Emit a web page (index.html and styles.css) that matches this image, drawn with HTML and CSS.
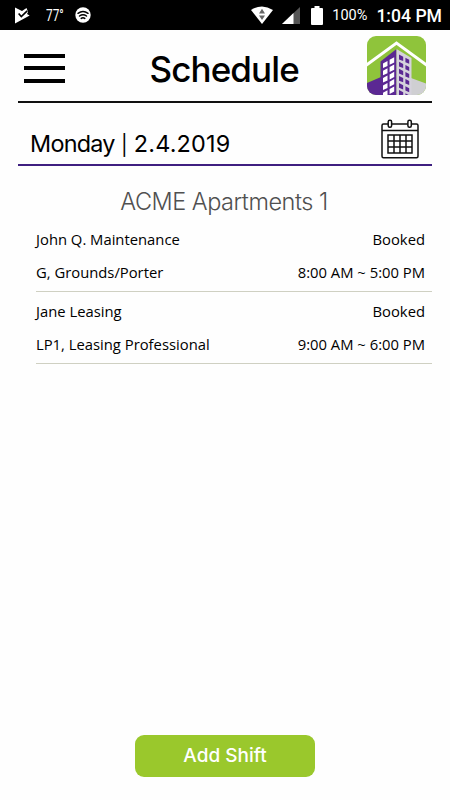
FILE: index.html
```html
<!DOCTYPE html>
<html lang="en">
<head>
<meta charset="utf-8">
<title>Schedule</title>
<link rel="stylesheet" href="styles.css">
</head>
<body>
<div class="screen">
  <div class="status">
    <svg class="status-check" viewBox="0 0 16 17" width="16" height="17"><path d="M1 0.5 L8 4 L12.5 1 L14 5 L13 7 L15.7 8.5 L1 16.5Z" fill="#fff"/><path d="M4.6 6.5 L7.3 9.5 L13.2 3.8" fill="none" stroke="#000" stroke-width="1.6"/></svg>
    <span class="temp">77°</span>
    <svg class="status-cast" viewBox="0 0 16 16" width="16" height="16"><circle cx="8" cy="8" r="7.7" fill="#fff"/><g fill="none" stroke="#000" stroke-width="1.5" stroke-linecap="round"><path d="M3 6.3 Q8 2.8 13 6.3"/><path d="M4.5 9 Q8 6.4 11.5 9"/><path d="M6.2 11.4 Q8 10 9.8 11.4"/></g></svg>
    <svg class="status-wifi" viewBox="0 0 22 18" width="22" height="18"><path d="M0 4 Q11 -3 22 4 L11 18Z" fill="#fff"/><path d="M11 2.8 L14 7.5 H8Z M8 9.5 H14 L11 14Z" fill="#666"/></svg>
    <svg class="status-signal" viewBox="0 0 18 17" width="18" height="17"><path d="M0 17 L18 0 V17Z" fill="#555"/><path d="M0 17 L11.5 6.1 V17Z" fill="#fff"/></svg>
    <svg class="status-battery" viewBox="0 0 12 19" width="12" height="19"><path d="M0 3 Q0 2 1 2 H3.5 V0 H8.5 V2 H11 Q12 2 12 3 V18 Q12 19 11 19 H1 Q0 19 0 18Z" fill="#fff"/></svg>
    <span class="percent">100%</span>
    <span class="clock">1:04 PM</span>
  </div>

  <header class="header">
    <div class="menu"><i></i><i></i><i></i></div>
    <h1 class="title">Schedule</h1>
    <svg class="logo" viewBox="0 0 59 59" width="59" height="59">
      <defs>
        <clipPath id="tile"><rect width="59" height="59" rx="9"/></clipPath>
        <path id="panes-left" fill="#fff" d="M16 27.5 L20.5 25 V30 L16 32Z M22.6 23.8 L27.2 21.2 V26.4 L22.6 28.8Z"/>
        <path id="panes-right" fill="#5b2893" d="M32 18.6 L36.2 20.8 V25 L32 23.4Z M38.4 21.8 L42.2 23.8 V27.8 L38.4 26.2Z"/>
      </defs>
      <g clip-path="url(#tile)">
        <rect width="59" height="59" fill="#8fc43b"/>
        <path d="M0 47 L14 41 V59 H0Z" fill="#5b2893"/>
        <path d="M44 42 L59 47.5 V59 H44Z" fill="#cfcfd2"/>
        <path d="M-2 30 L29.5 7 L61 30" fill="none" stroke="#fff" stroke-width="3"/>
        <path d="M13.5 25.5 L29.5 13 V59 H13.5Z" fill="#5b2893"/>
        <path d="M29.5 13 L44.5 22 V59 H29.5Z" fill="#d5d2dc"/>
        <use href="#panes-left"/>
        <use href="#panes-left" y="7.3"/>
        <use href="#panes-left" y="14.6"/>
        <use href="#panes-left" y="21.9"/>
        <use href="#panes-left" y="29.2"/>
        <use href="#panes-right"/>
        <use href="#panes-right" y="7.1"/>
        <use href="#panes-right" y="14.2"/>
        <use href="#panes-right" y="21.3"/>
        <use href="#panes-right" y="28.4"/>
        <use href="#panes-right" y="35.5"/>
      </g>
    </svg>
  </header>

  <div class="datebar">
    <span class="date"><span class="day">Monday</span> <span class="bar">|</span> <span class="numbers">2.4.2019</span></span>
    <svg class="calendar" viewBox="0 0 38 40" width="38" height="40" fill="none" stroke="#111" stroke-width="1.5">
      <rect x="1" y="5" width="36" height="33.8" rx="1.5"/>
      <path d="M1 11.5 H37"/>
      <rect x="7.2" y="1.2" width="3.4" height="7" rx="1.5" fill="#fff"/>
      <rect x="26.9" y="1.2" width="3.4" height="7" rx="1.5" fill="#fff"/>
      <path d="M7 16 H31 V34 H7Z M13 16 V34 M19 16 V34 M25 16 V34 M7 22 H31 M7 28 H31"/>
    </svg>
  </div>

  <h2 class="property">ACME Apartments 1</h2>

  <main class="shifts">
    <section class="shift">
      <div class="row"><span>John Q. Maintenance</span><span>Booked</span></div>
      <div class="row"><span>G, Grounds/Porter</span><span>8:00 AM ~ 5:00 PM</span></div>
    </section>
    <section class="shift">
      <div class="row"><span>Jane Leasing</span><span>Booked</span></div>
      <div class="row"><span>LP1, Leasing Professional</span><span>9:00 AM ~ 6:00 PM</span></div>
    </section>
  </main>

  <button class="add">Add Shift</button>
</div>
</body>
</html>
```

FILE: styles.css
```css
* { box-sizing: border-box; }
body { margin: 0; }
.screen {
  width: 450px;
  height: 800px;
  display: flex;
  flex-direction: column;
  background: #fefefe;
  font-family: Inter, "Liberation Sans", sans-serif;
  color: #000;
  overflow: hidden;
}
.status {
  height: 30px;
  flex: none;
  display: flex;
  align-items: center;
  padding: 0 8px 0 14px;
  background: #000;
  color: #fff;
  font-family: Roboto, sans-serif;
  white-space: nowrap;
}
.temp {
  width: 18px;
  margin-left: 16px;
  font-size: 16px;
  transform: scaleX(0.74);
  transform-origin: left;
}
.status-cast { margin-left: 10.5px; }
.status-wifi { margin-left: auto; }
.status-signal { margin-left: 9px; }
.status-battery { margin-left: 11px; }
.percent { margin-left: 9px; margin-top: 1px; font-size: 14.5px; }
.clock { margin-left: 9px; margin-top: 1px; font-size: 17.6px; font-weight: 500; }

.header {
  height: 73px;
  flex: none;
  display: flex;
  align-items: flex-start;
  margin: 0 18px;
  padding: 6px 6px 0;
  border-bottom: 2px solid #111;
}
.menu {
  width: 41px;
  margin-top: 18px;
  display: flex;
  flex-direction: column;
  gap: 8.4px;
}
.menu i { height: 4px; background: #000; }
.title {
  width: 160px;
  margin: 11px 0 0 84.5px;
  font-size: 35px;
  line-height: 44px;
  font-weight: 500;
  letter-spacing: -0.9px;
}
.logo { margin-left: auto; }
.datebar {
  height: 63px;
  flex: none;
  display: flex;
  align-items: flex-start;
  justify-content: space-between;
  margin: 0 18px;
  padding: 16px 13px 0 12px;
  border-bottom: 2px solid #3f1f80;
}
.date {
  margin-top: 10px;
  font-size: 23.4px;
  line-height: 30px;
  letter-spacing: -0.28px;
}
.day { letter-spacing: -0.75px; }
.bar { font-size: 20px; }
.numbers { letter-spacing: 0.2px; }
.property {
  margin: 20px 2px 0 0;
  text-align: center;
  font-size: 23.5px;
  line-height: 32px;
  font-weight: 300;
  letter-spacing: -0.48px;
  color: #505050;
}
.shifts {
  margin: 2px 18px 0 36px;
  font-family: "Open Sans", "Noto Sans", sans-serif;
  font-size: 14.8px;
}
.shift {
  padding: 3px 7px 0 0;
  height: 72px;
  border-bottom: 1px solid #cfd0c2;
}
.row {
  height: 33px;
  line-height: 32px;
  display: flex;
  justify-content: space-between;
}
.add {
  width: 180px;
  height: 42px;
  flex: none;
  margin: auto auto 23.5px;
  padding: 0;
  border: 0;
  border-radius: 9px;
  background: #9ac82c;
  color: #fff;
  font: 500 19px/42px Inter, "Liberation Sans", sans-serif;
}
```
